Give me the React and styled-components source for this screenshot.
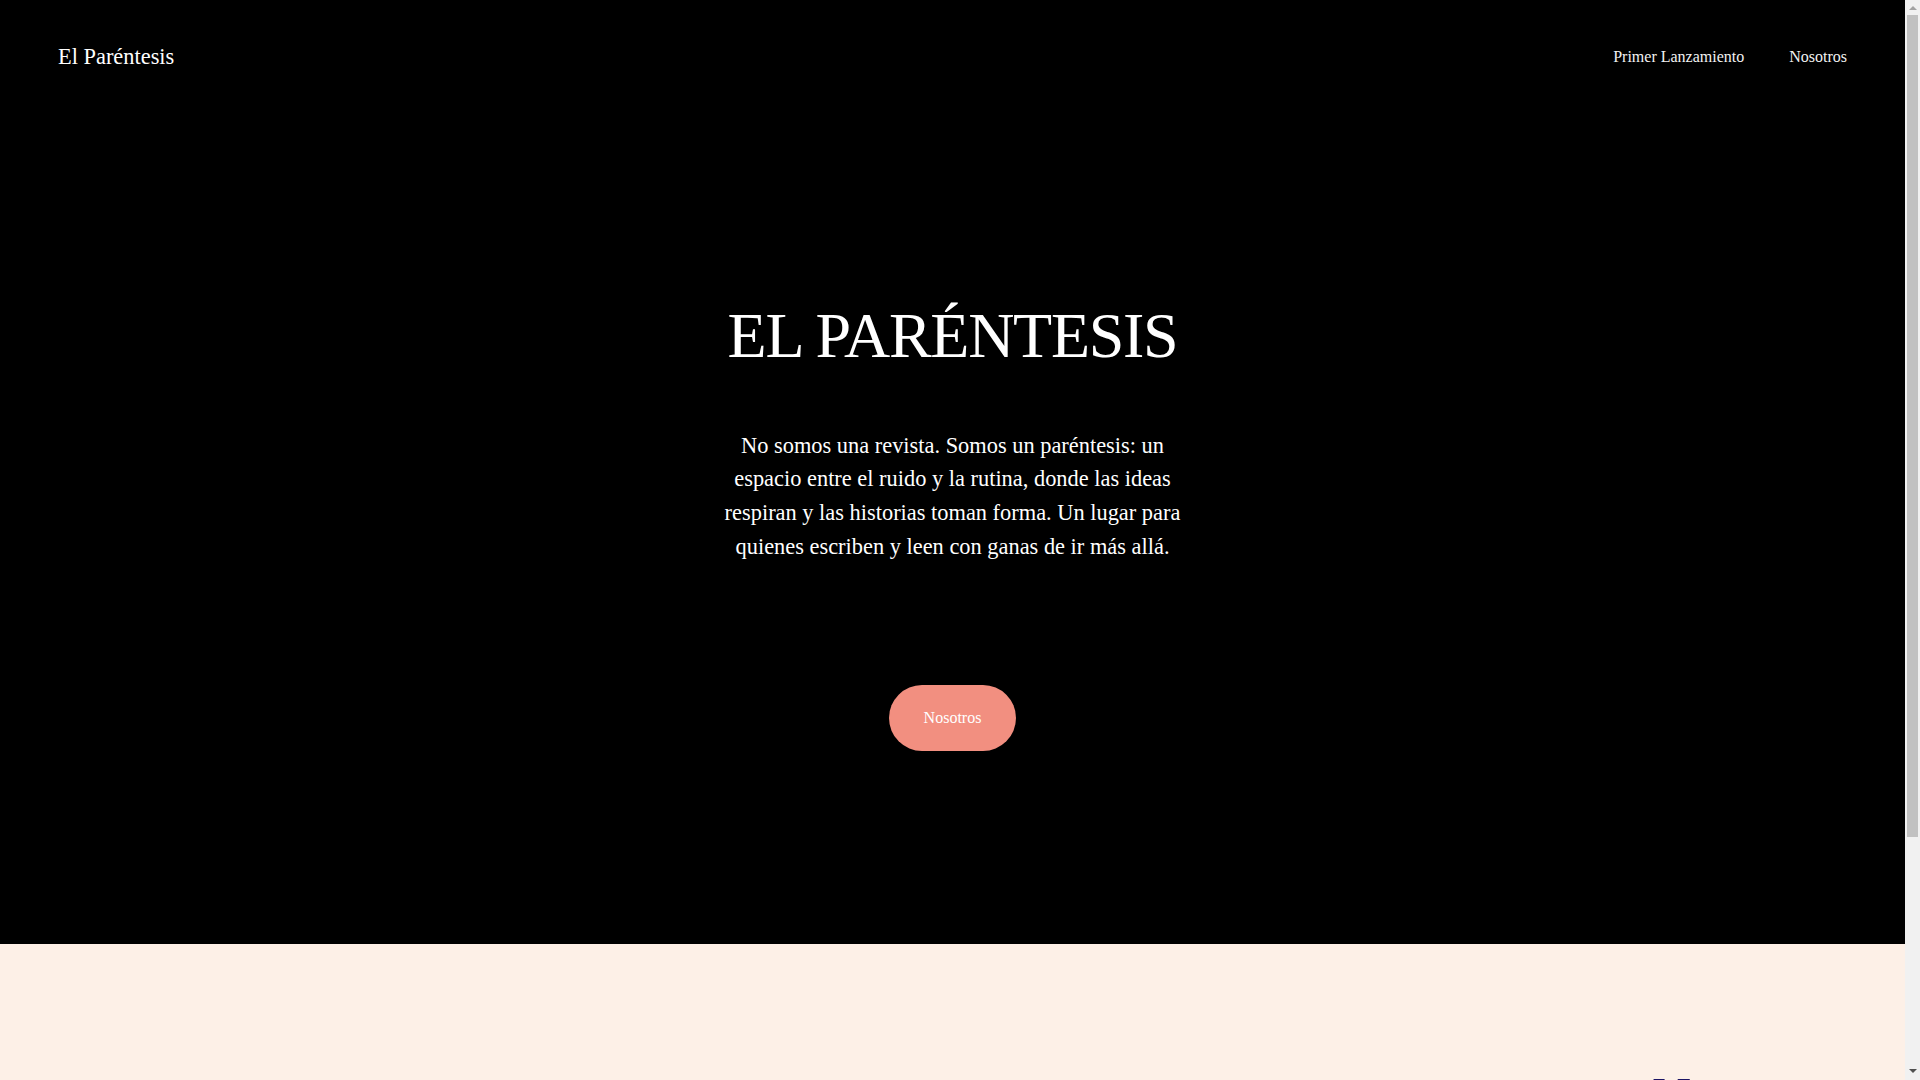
import React from 'react';
import styled, { createGlobalStyle } from 'styled-components';

const GlobalStyle = createGlobalStyle`
  html, body {
    margin: 0;
    padding: 0;
  }
  body {
    background: #fdf0e7;
    font-family: 'Liberation Serif', 'Times New Roman', serif;
    margin-right: 15px;
  }
`;

const App = () => {
  return (
    <>
      <GlobalStyle />
      <Hero>
        <Header>
          <Logo href="#">El Paréntesis</Logo>
          <Nav>
            <NavLink href="#">Primer Lanzamiento</NavLink>
            <NavLink href="#">Nosotros</NavLink>
          </Nav>
        </Header>
        <HeroContent>
          <Title>EL PARÉNTESIS</Title>
          <Intro>
            No somos una revista. Somos un paréntesis: un espacio entre el ruido y la
            rutina, donde las ideas respiran y las historias toman forma. Un lugar para
            quienes escriben y leen con ganas de ir más allá.
          </Intro>
          <PillButton href="#">Nosotros</PillButton>
        </HeroContent>
      </Hero>
      <Release>
        <ReleaseTitle>Nosotros</ReleaseTitle>
      </Release>
      <ScrollTrack>
        <ScrollArrow $up />
        <ScrollThumb />
        <ScrollArrow />
      </ScrollTrack>
    </>
  );
};

export default App;

const Hero = styled.section`
  background: #000;
  color: #fff;
  height: 944px;
  display: flex;
  flex-direction: column;
`;

const Header = styled.header`
  height: 114px;
  display: flex;
  align-items: center;
  justify-content: space-between;
  padding: 0 58px;
`;

const Logo = styled.a`
  color: #fff;
  text-decoration: none;
  font-size: 22.4px;
`;

const Nav = styled.nav`
  display: flex;
  gap: 45px;
`;

const NavLink = styled.a`
  color: #f2f2f2;
  text-decoration: none;
  font-size: 16px;
`;

const HeroContent = styled.div`
  display: flex;
  flex-direction: column;
  align-items: center;
  text-align: center;
`;

const Title = styled.h1`
  margin: 184px 0 0;
  font-weight: 400;
  font-size: 64px;
  line-height: 1.2;
  letter-spacing: -0.02em;
`;

const Intro = styled.p`
  margin: 54px 0 0;
  max-width: 480px;
  font-size: 22.4px;
  line-height: 33.6px;
`;

const PillButton = styled.a`
  margin-top: 122px;
  height: 66px;
  padding: 0 35px;
  display: inline-flex;
  align-items: center;
  background: #f28f80;
  color: #fff;
  border-radius: 33px;
  text-decoration: none;
  font-size: 16px;
`;

const Release = styled.section`
  background: #fdf0e7;
  height: 436px;
  display: flex;
  justify-content: flex-end;
  padding: 122px 58px 0 0;
  box-sizing: border-box;
`;

const ReleaseTitle = styled.h2`
  margin: 0;
  font-weight: 400;
  font-size: 54px;
  line-height: normal;
  color: #1b1464;
`;

/* stand-in for the browser's vertical scrollbar */
const ScrollTrack = styled.div`
  position: fixed;
  top: 0;
  right: 0;
  width: 15px;
  height: 100vh;
  background: #f1f1f1;
  display: flex;
  flex-direction: column;
  align-items: center;
`;

const ScrollThumb = styled.div`
  width: 11px;
  height: 822px;
  margin-top: 2px;
  background: #c1c1c1;
`;

const ScrollArrow = styled.div`
  width: 0;
  height: 0;
  border-left: 4px solid transparent;
  border-right: 4px solid transparent;
  ${({ $up }) =>
    $up
      ? `border-bottom: 4px solid #a3a3a3; margin-top: 6px; margin-bottom: 3px;`
      : `border-top: 4px solid #505050; margin-top: auto; margin-bottom: 7px;`}
`;
